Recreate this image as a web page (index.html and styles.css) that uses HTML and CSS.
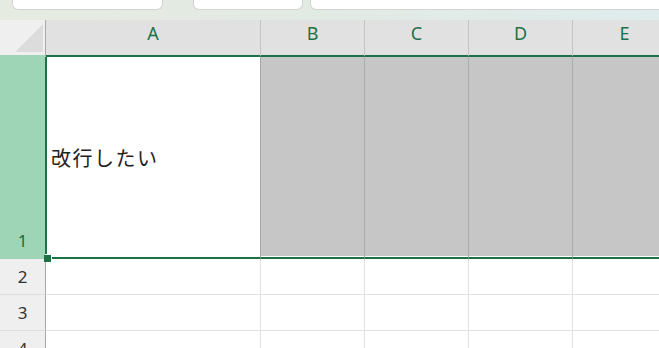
FILE: index.html
```html
<!DOCTYPE html>
<html lang="ja">
<head>
  <meta charset="UTF-8">
  <title>Book1 - Excel</title>
  <link rel="stylesheet" href="styles.css">
</head>
<body>
  <!-- formula bar (scrolled, only its lower edge shows) -->
  <div class="topbar">
    <div class="namebox"><span>A1</span></div>
    <div class="funcbox"><span class="chev">&#8964;</span></div>
    <div class="formula"></div>
  </div>

  <div class="sheet">
    <!-- column headers -->
    <div class="corner"><span class="tri"></span></div>
    <div class="colhead">A</div>
    <div class="colhead">B</div>
    <div class="colhead">C</div>
    <div class="colhead">D</div>
    <div class="colhead">E</div>

    <!-- row 1 (selected) -->
    <div class="rowhead sel">1</div>
    <div class="cell active">
      改行したい
      <span class="handle"></span>
    </div>
    <div class="cell shade"></div>
    <div class="cell shade"></div>
    <div class="cell shade"></div>
    <div class="cell shade"></div>

    <!-- row 2 -->
    <div class="rowhead">2</div>
    <div class="cell"></div>
    <div class="cell"></div>
    <div class="cell"></div>
    <div class="cell"></div>
    <div class="cell"></div>

    <!-- row 3 -->
    <div class="rowhead">3</div>
    <div class="cell"></div>
    <div class="cell"></div>
    <div class="cell"></div>
    <div class="cell"></div>
    <div class="cell"></div>

    <!-- row 4 -->
    <div class="rowhead">4</div>
    <div class="cell"></div>
    <div class="cell"></div>
    <div class="cell"></div>
    <div class="cell"></div>
    <div class="cell"></div>
  </div>
</body>
</html>
```

FILE: styles.css
```css
:root {
  --xl-green: #1e7145;
  --hdr-bg: #e1e1e1;
  --hdr-line: #c4c4c4;
  --rowhdr-bg: #efefef;
  --sel-green: #9fd5b7;
  --grid: #e1e1e1;
  --shade: #c6c6c6;
}

* {
  box-sizing: border-box;
}

body {
  margin: 0;
  width: 659px;
  height: 348px;
  overflow: hidden;
  background: #fff;
  font-family: 'Noto Sans', 'Noto Sans CJK JP', sans-serif;
  color: #222;
}

/* formula bar strip */
.topbar {
  height: 20px;
  display: flex;
  background: linear-gradient(90deg, #e6ebe1, #e2eae4 50%, #deecec);
  overflow: hidden;
}

.namebox,
.funcbox,
.formula {
  height: 11px;
  margin-top: -1px;
  background: #fff;
  border: 1px solid #d3d3d3;
  border-top: none;
  border-radius: 0 0 6px 6px;
  display: flex;
  align-items: flex-end;
  overflow: hidden;
}

.namebox {
  margin-left: 12px;
  width: 151px;
  padding-left: 8px;
}

.namebox span {
  font-size: 15px;
  line-height: 15px;
  margin-bottom: 8px;
  color: #222;
}

.funcbox {
  margin-left: 30px;
  width: 110px;
  justify-content: flex-end;
  padding-right: 20px;
}

.chev {
  font-size: 14px;
  line-height: 14px;
  margin-bottom: 7px;
  color: #444;
}

.formula {
  margin-left: 7px;
  flex: 1;
  margin-right: -10px;
}

/* grid */
.sheet {
  display: grid;
  grid-template-columns: 46px 215px 104px 104px 104px 104px;
  grid-template-rows: 37px 202px 36px 36px 36px;
}

.corner {
  background: #efefef;
  border-right: 1px solid #a9a9a9;
  border-bottom: 2px solid var(--sel-green);
  position: relative;
}

.tri {
  position: absolute;
  right: 2px;
  bottom: 3px;
  width: 28px;
  height: 28px;
  background: #dcdcdc;
  clip-path: polygon(100% 0, 100% 100%, 0 100%);
}

.colhead {
  background: var(--hdr-bg);
  border-right: 1px solid var(--hdr-line);
  border-bottom: 2px solid var(--xl-green);
  color: var(--xl-green);
  font-size: 18px;
  text-align: center;
  padding-top: 3px;
  line-height: 20px;
}

.rowhead {
  background: var(--rowhdr-bg);
  border-right: 1px solid #a9a9a9;
  border-bottom: 1px solid #dcdcdc;
  color: #333;
  font-size: 17px;
  display: flex;
  align-items: center;
  justify-content: center;
}

.rowhead.sel {
  background: var(--sel-green);
  border-right: 1px solid var(--xl-green);
  border-bottom: 2px solid var(--sel-green);
  color: #1d6b41;
  align-items: flex-end;
  padding-bottom: 5px;
}

.cell {
  border-right: 1px solid var(--grid);
  border-bottom: 1px solid var(--grid);
}

.cell.active {
  position: relative;
  border-left: 1px solid var(--xl-green);
  border-right: 1px solid #a6a6a6;
  border-bottom: 2px solid var(--xl-green);
  display: flex;
  align-items: center;
  padding-left: 4px;
  font-size: 20px;
  letter-spacing: 1.5px;
  color: #222;
}

.cell.shade {
  background: var(--shade);
  border-right: 1px solid #acacac;
  border-bottom: 2px solid var(--xl-green);
  box-shadow: inset 0 -1px 0 #fff;
}

.handle {
  position: absolute;
  left: -3px;
  bottom: -5px;
  width: 7px;
  height: 7px;
  background: var(--xl-green);
  box-shadow: 1px -1px 0 #fff;
}
```
